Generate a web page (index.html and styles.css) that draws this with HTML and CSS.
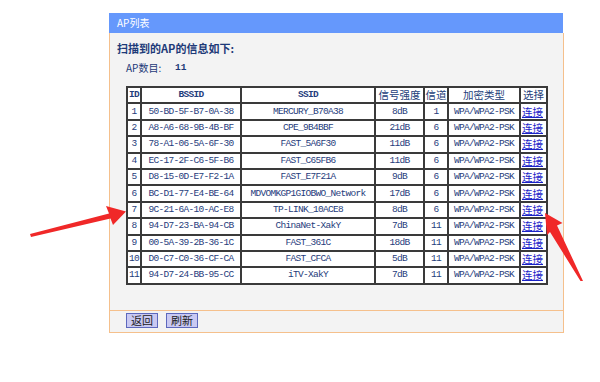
FILE: index.html
```html
<!DOCTYPE html>
<html lang="zh-CN">
<head>
<meta charset="utf-8">
<title>AP列表</title>
<link rel="stylesheet" href="styles.css">
</head>
<body>
<div class="page">
  <div class="panel">
    <div class="panel-title">AP列表</div>
    <div class="panel-body">
      <div class="heading">扫描到的AP的信息如下:</div>
      <div class="count"><span class="count-label">AP数目:</span><span class="count-num">11</span></div>
      <table class="ap-table">
        <colgroup>
          <col class="c-id"><col class="c-bssid"><col class="c-ssid"><col class="c-sig"><col class="c-ch"><col class="c-enc"><col class="c-sel">
        </colgroup>
        <thead>
          <tr>
            <th class="mono">ID</th><th class="mono">BSSID</th><th class="mono">SSID</th><th class="cjk">信号强度</th><th class="cjk">信道</th><th class="cjk">加密类型</th><th class="cjk">选择</th>
          </tr>
        </thead>
        <tbody>
          <tr><td>1</td><td>50-BD-5F-B7-0A-38</td><td>MERCURY_B70A38</td><td>8dB</td><td>1</td><td>WPA/WPA2-PSK</td><td class="sel"><a href="#">连接</a></td></tr>
          <tr><td>2</td><td>A8-A6-68-9B-4B-BF</td><td>CPE_9B4BBF</td><td>21dB</td><td>6</td><td>WPA/WPA2-PSK</td><td class="sel"><a href="#">连接</a></td></tr>
          <tr><td>3</td><td>78-A1-06-5A-6F-30</td><td>FAST_5A6F30</td><td>11dB</td><td>6</td><td>WPA/WPA2-PSK</td><td class="sel"><a href="#">连接</a></td></tr>
          <tr><td>4</td><td>EC-17-2F-C6-5F-B6</td><td>FAST_C65FB6</td><td>11dB</td><td>6</td><td>WPA/WPA2-PSK</td><td class="sel"><a href="#">连接</a></td></tr>
          <tr><td>5</td><td>D8-15-0D-E7-F2-1A</td><td>FAST_E7F21A</td><td>9dB</td><td>6</td><td>WPA/WPA2-PSK</td><td class="sel"><a href="#">连接</a></td></tr>
          <tr><td>6</td><td>BC-D1-77-E4-BE-64</td><td>MDVOMKGP1GIOBWO_Network</td><td>17dB</td><td>6</td><td>WPA/WPA2-PSK</td><td class="sel"><a href="#">连接</a></td></tr>
          <tr><td>7</td><td>9C-21-6A-10-AC-E8</td><td>TP-LINK_10ACE8</td><td>8dB</td><td>6</td><td>WPA/WPA2-PSK</td><td class="sel"><a href="#">连接</a></td></tr>
          <tr><td>8</td><td>94-D7-23-BA-94-CB</td><td>ChinaNet-XakY</td><td>7dB</td><td>11</td><td>WPA/WPA2-PSK</td><td class="sel"><a href="#">连接</a></td></tr>
          <tr><td>9</td><td>00-5A-39-2B-36-1C</td><td>FAST_361C</td><td>18dB</td><td>11</td><td>WPA/WPA2-PSK</td><td class="sel"><a href="#">连接</a></td></tr>
          <tr><td>10</td><td>D0-C7-C0-36-CF-CA</td><td>FAST_CFCA</td><td>5dB</td><td>11</td><td>WPA/WPA2-PSK</td><td class="sel"><a href="#">连接</a></td></tr>
          <tr><td>11</td><td>94-D7-24-BB-95-CC</td><td>iTV-XakY</td><td>7dB</td><td>11</td><td>WPA/WPA2-PSK</td><td class="sel"><a href="#">连接</a></td></tr>
        </tbody>
      </table>
    </div>
    <div class="panel-foot">
      <button class="btn" type="button">返回</button>
      <button class="btn" type="button">刷新</button>
    </div>
  </div>
</div>
<svg class="arrows" width="600" height="382" viewBox="0 0 600 382" aria-hidden="true">
  <polygon points="30,234 109,213.5 106,206 126,211.5 113,225 110.5,218.5 31,237" fill="#f02828"/>
  <polygon points="545,213 562.5,223 557,225.5 583,281 580.5,281 550,232 547,235" fill="#f02828"/>
</svg>
</body>
</html>
```

FILE: styles.css
```css
html, body {
  margin: 0;
  padding: 0;
  background: #ffffff;
}

body {
  position: relative;
  width: 600px;
  height: 382px;
  overflow: hidden;
  font-family: "Noto Sans CJK SC", "Liberation Sans", sans-serif;
}

.page {
  padding: 13px 0 0 109px;
}

.panel {
  width: 455px;
  box-sizing: border-box;
}

.panel-title {
  height: 20px;
  line-height: 20px;
  background: #6598fc;
  color: #ffffff;
  font-size: 10px;
  padding-left: 8px;
  margin-right: 1px;
}

.panel-body {
  background: #f3f3f3;
  border-left: 1px solid #f5c08c;
  border-right: 1px solid #f5c08c;
  padding: 8px 0 25px 7px;
}

.heading {
  font-size: 11px;
  line-height: 15px;
  font-weight: bold;
  color: #1d3a78;
}

.count {
  margin-top: 4px;
  padding-left: 9px;
  height: 16px;
  line-height: 16px;
  font-size: 10px;
  color: #1d3a78;
  display: flex;
  align-items: center;
}

.count-label {
  width: 49px;
}

.count-num {
  font-family: "Liberation Mono", monospace;
  font-size: 9.5px;
  font-weight: bold;
}

.ap-table {
  margin: 10px 0 0 9px;
  border-collapse: separate;
  border-spacing: 0;
  border: 1px solid #3a3a3a;
  table-layout: fixed;
  width: 420px;
  background: #ffffff;
}

.c-id { width: 14px; }
.c-bssid { width: 100px; }
.c-ssid { width: 134px; }
.c-sig { width: 49px; }
.c-ch { width: 24px; }
.c-enc { width: 72px; }
.c-sel { width: 27px; }

.ap-table th,
.ap-table td {
  box-sizing: border-box;
  border: 1px solid #3a3a3a;
  padding: 0;
  height: 16.4px;
  line-height: 12px;
  text-align: center;
  vertical-align: middle;
  white-space: nowrap;
  overflow: hidden;
  color: #1f3d7c;
  font-family: "Liberation Mono", monospace;
  font-size: 9.5px;
  letter-spacing: -0.7px;
}

.ap-table th {
  font-weight: bold;
}

.ap-table th.cjk,
.ap-table td.sel {
  font-family: "Noto Sans CJK SC", sans-serif;
  font-weight: normal;
  font-size: 10.5px;
  line-height: 12px;
  letter-spacing: 0;
  color: #23407a;
}

.ap-table td.sel {
  text-align: left;
  padding-left: 1px;
}

.ap-table td.sel a {
  color: #1a22c8;
  text-decoration: underline;
}

.panel-foot {
  background: #f3f3f3;
  border: 1px solid #f5c08c;
  height: 23px;
  padding: 2px 0 0 16px;
  box-sizing: border-box;
  display: flex;
  gap: 8px;
  align-items: flex-start;
}

.btn {
  height: 15px;
  width: 32px;
  padding: 0;
  margin: 0;
  background: #c9c9f2;
  border: 1px solid #5d68bd;
  color: #1a1a1a;
  font-family: "Noto Sans CJK SC", sans-serif;
  font-size: 11px;
  line-height: 13px;
}

.arrows {
  position: absolute;
  left: 0;
  top: 0;
  pointer-events: none;
}
```
